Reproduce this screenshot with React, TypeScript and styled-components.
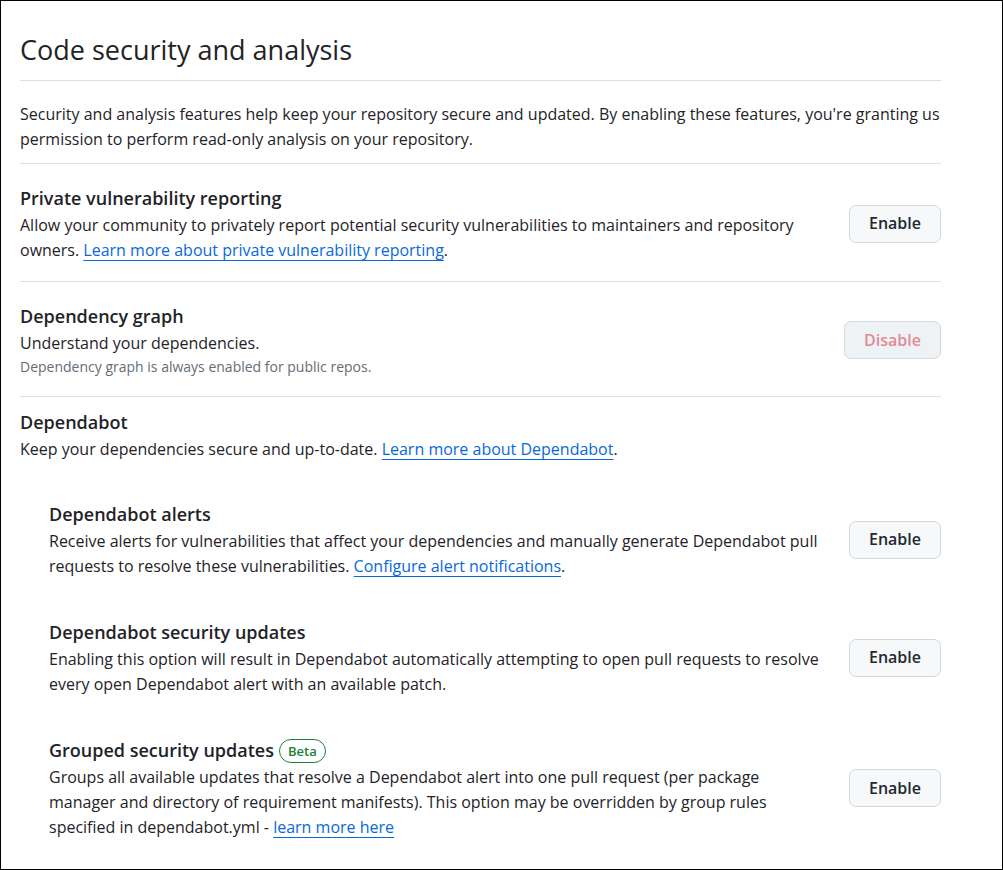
import React from "react";
import styled, { createGlobalStyle } from "styled-components";

const GlobalStyle = createGlobalStyle`
  *, *::before, *::after { box-sizing: border-box; }
  body {
    margin: 0;
    background: #ffffff;
    color: #1f2328;
    font-family: "Segoe UI", "Open Sans", "Noto Sans", sans-serif;
    font-size: 16px;
    line-height: 25px;
  }
`;

const Page = styled.main`
  min-height: 100vh;
  padding: 27px 61px 28px 19px;
  border: 1px solid #000000;
`;

const Title = styled.h1`
  margin: 0;
  padding-bottom: 8px;
  border-bottom: 1px solid #d8dee4;
  font-size: 27px;
  font-weight: 400;
  line-height: 44px;
`;

const Intro = styled.p`
  margin: 0;
  padding: 21px 0 11px;
  border-bottom: 1px solid #dddfe2;
`;

const Setting = styled.section`
  display: flex;
  align-items: center;
  justify-content: space-between;
  gap: 24px;
  padding: 20px 0 18px;
  border-bottom: 1px solid #dddfe2;
`;

const Group = styled.section`
  padding-top: 11px;
`;

const SubSettings = styled.div`
  display: flex;
  flex-direction: column;
  gap: 39px;
  padding: 38px 0 0 29px;
`;

const SubSetting = styled.section`
  display: flex;
  align-items: center;
  justify-content: space-between;
  gap: 24px;
`;

const Details = styled.div`
  flex: 1;
  min-width: 0;
`;

const Heading = styled.h2`
  display: flex;
  align-items: center;
  gap: 5px;
  margin: 0;
  font-size: 18px;
  font-weight: 600;
  line-height: 29px;
`;

const Text = styled.p`
  margin: 0;
`;

const Note = styled.p`
  margin: 0;
  color: #656d76;
  font-size: 14px;
  line-height: 22px;
`;

const Link = styled.a`
  color: #0969da;
  text-decoration: underline;
  text-decoration-thickness: 1px;
  text-underline-offset: 4px;
  text-decoration-skip-ink: none;
`;

const Badge = styled.span`
  padding: 0 8px;
  border: 1px solid #1a7f37;
  border-radius: 12px;
  color: #1a7f37;
  font-size: 13px;
  font-weight: 600;
  line-height: 22px;
`;

const Button = styled.button<{ $danger?: boolean }>`
  flex: none;
  height: 38px;
  padding: 0 19px;
  border: 1px solid #d1d9e0;
  border-radius: 7px;
  background: ${(p) => (p.$danger ? "#eef2f5" : "#f6f8fa")};
  color: ${(p) => (p.$danger ? "#e28a95" : "#24292f")};
  font-family: inherit;
  font-size: 16px;
  font-weight: 600;
  line-height: 25px;
`;

export default function App() {
  return (
    <>
      <GlobalStyle />
      <Page>
        <Title>Code security and analysis</Title>
        <Intro>
          Security and analysis features help keep your repository secure and updated. By enabling these features,
          you're granting us permission to perform read-only analysis on your repository.
        </Intro>

        <Setting>
          <Details>
            <Heading>Private vulnerability reporting</Heading>
            <Text>
              Allow your community to privately report potential security vulnerabilities to maintainers and repository
              owners. <Link href="#reporting">Learn more about private vulnerability reporting</Link>.
            </Text>
          </Details>
          <Button type="button">Enable</Button>
        </Setting>

        <Setting>
          <Details>
            <Heading>Dependency graph</Heading>
            <Text>Understand your dependencies.</Text>
            <Note>Dependency graph is always enabled for public repos.</Note>
          </Details>
          <Button type="button" $danger disabled>
            Disable
          </Button>
        </Setting>

        <Group>
          <Heading>Dependabot</Heading>
          <Text>
            Keep your dependencies secure and up-to-date. <Link href="#dependabot">Learn more about Dependabot</Link>.
          </Text>
          <SubSettings>
            <SubSetting>
              <Details>
                <Heading>Dependabot alerts</Heading>
                <Text>
                  Receive alerts for vulnerabilities that affect your dependencies and manually generate Dependabot pull
                  requests to resolve these vulnerabilities. <Link href="#alerts">Configure alert notifications</Link>.
                </Text>
              </Details>
              <Button type="button">Enable</Button>
            </SubSetting>
            <SubSetting>
              <Details>
                <Heading>Dependabot security updates</Heading>
                <Text>
                  Enabling this option will result in Dependabot automatically attempting to open pull requests to
                  resolve every open Dependabot alert with an available patch.
                </Text>
              </Details>
              <Button type="button">Enable</Button>
            </SubSetting>
            <SubSetting>
              <Details>
                <Heading>
                  Grouped security updates <Badge>Beta</Badge>
                </Heading>
                <Text>
                  Groups all available updates that resolve a Dependabot alert into one pull request (per package
                  manager and directory of requirement manifests). This option may be overridden by group rules
                  specified in dependabot.yml - <Link href="#grouped">learn more here</Link>
                </Text>
              </Details>
              <Button type="button">Enable</Button>
            </SubSetting>
          </SubSettings>
        </Group>
      </Page>
    </>
  );
}
